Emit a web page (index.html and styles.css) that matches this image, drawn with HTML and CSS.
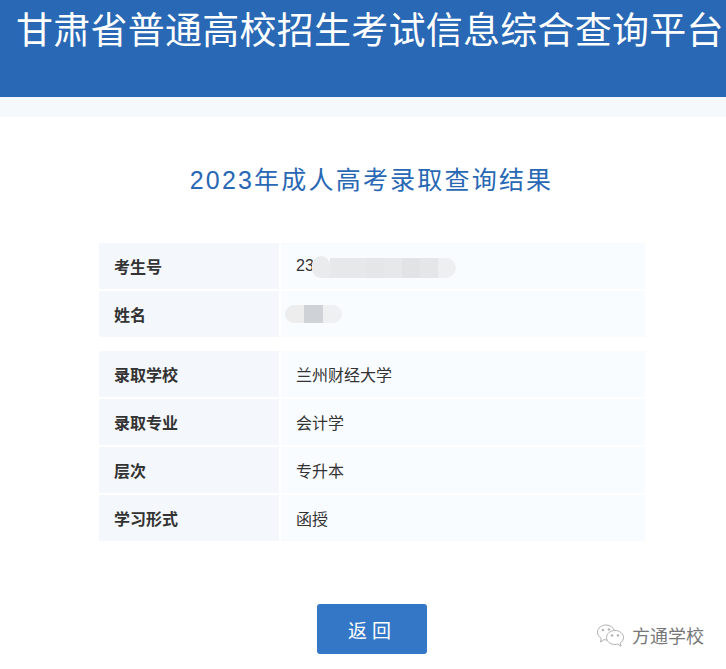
FILE: index.html
```html
<!DOCTYPE html>
<html lang="zh-CN">
<head>
    <meta charset="UTF-8">
    <meta name="viewport" content="width=device-width, initial-scale=1.0">
    <title>甘肃省普通高校招生考试信息综合查询平台</title>
    <link rel="stylesheet" href="styles.css">
</head>
<body>
    <div class="header">
        <h1>甘肃省普通高校招生考试信息综合查询平台</h1>
    </div>
    <div class="band"></div>

    <h2 class="result-title">2023年成人高考录取查询结果</h2>

    <div class="result-group">
        <div class="row">
            <div class="label">考生号</div>
            <div class="value">
                <span>23</span>
                <div class="mosaic mosaic-number">
                    <i class="m1"></i><i class="m2"></i><i class="m2"></i><i class="m3"></i><i class="m2"></i><i class="m4"></i><i class="m3"></i><i class="m5"></i>
                </div>
            </div>
        </div>
        <div class="row">
            <div class="label">姓名</div>
            <div class="value value-name">
                <div class="mosaic mosaic-name">
                    <i class="n1"></i><i class="n2"></i><i class="n3"></i>
                </div>
            </div>
        </div>
    </div>

    <div class="result-group">
        <div class="row">
            <div class="label">录取学校</div>
            <div class="value">兰州财经大学</div>
        </div>
        <div class="row">
            <div class="label">录取专业</div>
            <div class="value">会计学</div>
        </div>
        <div class="row">
            <div class="label">层次</div>
            <div class="value">专升本</div>
        </div>
        <div class="row">
            <div class="label">学习形式</div>
            <div class="value">函授</div>
        </div>
    </div>

    <div class="actions">
        <button class="back-btn">返回</button>
    </div>

    <!-- 公众号水印 -->
    <div class="watermark">
        <svg width="30" height="26" viewBox="0 0 30 26" fill="none" stroke="#b0b0b0" stroke-width="1">
            <path d="M11 16c-1 0-2-.2-3-.5L4.500 18l.7-3.800C2.800 12.700 1.500 10.500 1.500 8.200 1.500 4 5.500 1 10 1c4 0 7.500 2.300 8.300 5.600"/>
            <path d="M19 6.500c-4.800 0-8.500 3.200-8.500 7s3.700 7 8.500 7c1 0 1.900-.1 2.800-.4l3.200 2.100-.7-3.200c2-1.300 3.200-3.300 3.200-5.500 0-3.800-3.700-7-8.500-7z"/>
            <circle cx="7" cy="6" r=".8" fill="#8a8a8a"/>
            <circle cx="13" cy="5.500" r=".8" fill="#8a8a8a"/>
            <circle cx="16" cy="11.500" r=".8" fill="#8a8a8a"/>
            <circle cx="22" cy="11.500" r=".8" fill="#8a8a8a"/>
        </svg>
        <span>方通学校</span>
    </div>
</body>
</html>
```

FILE: styles.css
```css
html, body {
    margin: 0;
    padding: 0;
}
body {
    position: relative;
    height: 669px;
    overflow: hidden;
    background-color: #fff;
    color: #333;
    font-family: "Liberation Sans", "Noto Sans CJK SC", sans-serif;
}
.header {
    height: 97px;
    background-color: #2868b4;
    overflow: hidden;
}
.header h1 {
    margin: 0;
    padding: 9px 0 0 16px;
    font-size: 37px;
    line-height: 46px;
    font-weight: normal;
    letter-spacing: 0.25px;
    color: #fff;
    white-space: nowrap;
}
.band {
    height: 20px;
    background-color: #f5f9fc;
}
.result-title {
    margin: 45px 0 0;
    padding-left: 17px;
    text-align: center;
    font-size: 25px;
    line-height: 36px;
    font-weight: normal;
    letter-spacing: 2.2px;
    color: #2868b4;
}
.result-group {
    display: flex;
    flex-direction: column;
    gap: 2px;
    width: 546px;
    margin: 14px 0 0 99px;
}
.result-title + .result-group {
    margin-top: 45px;
}
.row {
    display: flex;
    gap: 2px;
    height: 46px;
}
.label {
    display: flex;
    align-items: center;
    width: 165px;
    padding-left: 15px;
    background-color: #f4f7fb;
    font-size: 16px;
    font-weight: bold;
}
.value {
    display: flex;
    align-items: center;
    flex: 1;
    padding-left: 15px;
    background-color: #f9fcff;
    font-size: 16px;
}
.value-name {
    padding-left: 4px;
}
.mosaic {
    display: flex;
}
.mosaic-number {
    align-items: flex-end;
    height: 22px;
    margin: 2px 0 0 -2px;
}
.mosaic-number i {
    display: block;
    width: 18px;
    height: 20px;
}
.mosaic-number .m1 {
    height: 22px;
    border-radius: 9px 9px 0 9px;
}
.mosaic-number .m5 {
    border-radius: 0 10px 10px 0;
}
.mosaic-name {
    height: 18px;
    overflow: hidden;
    border-radius: 9px;
}
.mosaic-name i {
    display: block;
    width: 19px;
}
.m1 { background-color: #eaebec; }
.m2 { background-color: #e7e8ea; }
.m3 { background-color: #e5e6e8; }
.m4 { background-color: #e1e3e5; }
.m5 { background-color: #eeeff0; }
.n1 { background-color: #ecedec; }
.n2 { background-color: #cfd2d6; }
.n3 { background-color: #eff0f2; }
.actions {
    display: flex;
    margin: 63px 0 0 317px;
}
.back-btn {
    width: 110px;
    height: 50px;
    padding: 0;
    border: none;
    border-radius: 3px;
    background-color: #3377c6;
    color: #fff;
    font-family: inherit;
    font-size: 19px;
    letter-spacing: 5px;
    cursor: pointer;
}
.watermark {
    position: absolute;
    left: 596px;
    top: 624px;
    display: flex;
    align-items: center;
    gap: 6px;
    color: #777;
    font-size: 18px;
    line-height: 26px;
}
```
